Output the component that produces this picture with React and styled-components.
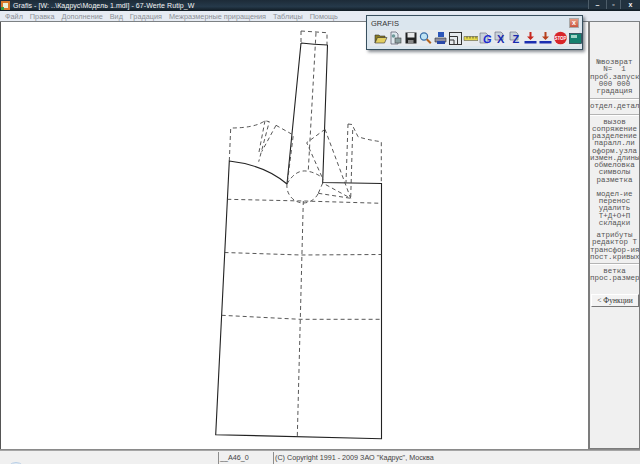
import React from "react";
import styled, { createGlobalStyle } from "styled-components";

const Global = createGlobalStyle`
  html, body { margin: 0; padding: 0; background: #fff; overflow: hidden; }
  * { box-sizing: border-box; }
`;

const Page = styled.div`
  width: 640px; height: 464px; position: relative; overflow: hidden;
  display: flex; flex-direction: column;
  font-family: "Liberation Sans", Arial, sans-serif;
  background: #f0f0f0;
`;
const TitleBar = styled.div`
  height: 11px; flex: none; display: flex; align-items: center; gap: 3px;
  padding: 0 0 1px 1px;
  background: linear-gradient(#1d2b38, #25394a 60%, #101a22);
  color: #f2f2f2; font-size: 7px; white-space: nowrap;
`;
const AppIcon = styled.svg` width: 9px; height: 9px; flex: none; `;
const TitleText = styled.span` flex: 1; letter-spacing: .01em; `;
const WinButtons = styled.div` display: flex; height: 9px; align-self: flex-start; `;
const WinButton = styled.div`
  width: ${p => p.$w}px; height: 9px; color: #f4f4f4; font-size: 7px; font-weight: bold;
  display: flex; align-items: center; justify-content: center;
  background: #22323f; border-left: 1px solid #4d5d69;
`;
const MenuBar = styled.div`
  height: 11px; flex: none; display: flex; align-items: center; gap: 6.9px;
  padding-left: 5px;
  background: #e6ebf3; color: #8b8f96; font-size: 7.3px; white-space: nowrap;
  border-bottom: 1px solid #7d8184;
`;
const Main = styled.div` flex: 1; display: flex; min-height: 0; border-bottom: 1px solid #8a8a8a; `;
const Canvas = styled.div`
  flex: 1; background: #fff; border-left: 1px solid #555; position: relative;
`;
const Drawing = styled.svg` display: block; width: 587px; height: 427px; `;
const Side = styled.aside`
  width: 52px; flex: none; background: #f0f0f0;
  border-left: 2px solid #7c7c7c; border-right: 1px solid #7c7c7c; border-bottom: 1px solid #7c7c7c;
  padding-top: 37px;
  font-family: "Liberation Mono", "DejaVu Sans Mono", monospace; font-size: 7.5px; line-height: 7.25px;
  color: #555; text-align: center; white-space: pre; overflow: hidden;
`;
const Group = styled.div` margin-bottom: ${p => p.$after || 0}px; `;
const Rule = styled.div`
  height: 2px; margin: ${p => p.$top || 0}px 0 ${p => p.$bottom || 0}px;
  border-top: 1px solid #b4b4b4; border-bottom: 1px solid #fff;
`;
const FuncButton = styled.div`
  height: 13px; margin: 11px 0 0 1px; width: 48px;
  background: #f3f3f3; border: 1px solid; border-color: #fff #777 #777 #fff;
  font-family: "Liberation Serif", serif; font-size: 7.5px; line-height: 11px; color: #333;
`;
const StatusBar = styled.div`
  height: 14px; flex: none; display: flex; align-items: flex-start; position: relative; overflow: hidden;
  background: #f0f0f0; border-top: 1px solid #a5a5a5; font-size: 7.2px; color: #444; padding-top: 1px;
`;
const StatusCell = styled.div`
  width: ${p => p.$w}px; height: 12px; line-height: 11px; white-space: nowrap; flex: none;
  padding-left: ${p => p.$pad || 0}px;
  border-left: ${p => (p.$line ? "1px solid #8d8d8d" : "none")};
`;
const Orb = styled.div`
  position: absolute; left: 6px; top: 11px; width: 20px; height: 20px; border-radius: 50%;
  border: 1px solid #b9cfe6; background: #e2ebf4;
`;
const Floater = styled.div`
  position: absolute; left: 366px; top: 15px; width: 217px; height: 35px;
  background: #dbe6ee; border: 1px solid #38505f;
  box-shadow: 2px 2px 3px rgba(40,50,60,.55);
  display: flex; flex-direction: column; padding: 1px 3px;
`;
const FloatHead = styled.div`
  height: 13px; display: flex; justify-content: space-between; align-items: center;
  font-size: 7.5px; color: #333; padding-left: 1px; padding-bottom: 1px;
`;
const FloatClose = styled.div`
  width: 10px; height: 10px; background: linear-gradient(#e99d85, #c9553e); border: 1px solid #a9a9a9;
  color: #fff; font-size: 7px; line-height: 8px; text-align: center; font-weight: bold;
`;
const Tools = styled.div`
  height: 16px; display: flex; align-items: center; background: #e6eaee; padding-left: 3px;
`;
const Tool = styled.svg` width: 15px; height: 16px; flex: none; `;

const menu = ["Файл", "Правка", "Дополнение", "Вид", "Градация", "Межразмерные приращения", "Таблицы", "Помощь"];

const icons = [
  <g key="0"><path d="M2 5h4l1 1h5v2H5l-3 5z" fill="#8a7a20" stroke="#333" strokeWidth=".6"/><path d="M2 13l2.500-5.500H14L11.500 13z" fill="#e3cf62" stroke="#333" strokeWidth=".6"/></g>,
  <g key="1"><path d="M3 2h5l2 2v10H3z" fill="#dfe9ee" stroke="#556" strokeWidth=".7"/><rect x="7" y="8" width="6" height="5" fill="#8aa0a0" stroke="#444" strokeWidth=".6"/><circle cx="5.500" cy="6" r="1.800" fill="#6f9a9a"/></g>,
  <g key="2"><rect x="2.500" y="2.500" width="11" height="11" fill="#222"/><rect x="4.500" y="3" width="7" height="4.500" fill="#e8e8e8"/><rect x="5" y="10" width="5.500" height="3.500" fill="#888"/></g>,
  <g key="3"><circle cx="6" cy="6.500" r="3.600" fill="#bfe3f5" stroke="#3a6ea8" strokeWidth="1.200"/><path d="M8.800 9.300l4 4" stroke="#b5641d" strokeWidth="2"/></g>,
  <g key="4"><rect x="5" y="2" width="6" height="5" fill="#2c55b8"/><path d="M2 8h11v4H2z" fill="#8e8e9e" stroke="#333" strokeWidth=".6"/><rect x="4" y="11" width="8" height="3" fill="#2848a8"/></g>,
  <g key="5" fill="none" stroke="#333" strokeWidth="1"><rect x="1.500" y="2.500" width="12" height="12"/><path d="M1.500 6.500h8v8M1.500 10h4.500v4.500"/></g>,
  <g key="6"><path d="M1 6.500h14v4H1z" fill="#e6d94c" stroke="#444" strokeWidth=".5"/><path d="M4 6.500v2M7 6.500v2M10 6.500v2M13 6.500v2" stroke="#222" strokeWidth=".7"/></g>,
  <g key="7"><path d="M2 3h6l2 2v8H2z" fill="#c8d2da" stroke="#667" strokeWidth=".6"/><text x="5" y="13" fontFamily="Liberation Sans" fontSize="11" fontWeight="bold" fontStyle="italic" fill="#1a2bd0">G</text></g>,
  <g key="8"><path d="M2 2h6l2 2v6H2z" fill="#c8d2da" stroke="#667" strokeWidth=".6"/><text x="4" y="13" fontFamily="Liberation Sans" fontSize="11" fontWeight="bold" fill="#1a2bb0">X</text></g>,
  <g key="9"><path d="M2 2h6l2 2v6H2z" fill="#c8d2da" stroke="#667" strokeWidth=".6"/><text x="4.500" y="13" fontFamily="Liberation Sans" fontSize="11" fontWeight="bold" fill="#1a2bb0">Z</text></g>,
  <g key="10"><path d="M6.500 2h2v4.500H11L7.500 10 4 6.500h2.500z" fill="#c8261c"/><rect x="1.500" y="11" width="12" height="2.500" fill="#1b2fb0"/></g>,
  <g key="11"><path d="M6.500 2h2v4.500H11L7.500 10 4 6.500h2.500z" fill="#b8401c"/><rect x="1.500" y="11" width="12" height="2.500" fill="#1b2fb0"/></g>,
  <g key="12"><circle cx="7.500" cy="8" r="6.300" fill="#d8262a"/><text x="7.500" y="9.700" textAnchor="middle" fontFamily="Liberation Sans" fontSize="4.500" fontWeight="bold" fill="#fff">STOP</text></g>,
  <g key="13"><rect x="1.500" y="3.500" width="12" height="10" fill="#14806f" stroke="#234" strokeWidth=".7"/><rect x="3" y="5" width="6" height="3" fill="#9fd6c8"/></g>,
];

const solid = { fill: "none", stroke: "#222", strokeWidth: 1.100 };
const dash = { fill: "none", stroke: "#444", strokeWidth: .9, strokeDasharray: "4 3" };

export default function App() {
  return (
    <Page>
      <Global />
      <TitleBar>
        <AppIcon viewBox="0 0 9 9"><rect width="9" height="9" fill="#d8792a"/><rect x="2" y="2" width="5" height="5" fill="#e9f0d8"/><rect x="0" y="6" width="3" height="3" fill="#3c9a3c"/></AppIcon>
        <TitleText>Grafis - [W: ..\Кадрус\Модель 1.mdl] - 67-Werte Rutip_W</TitleText>
        <WinButtons>
          <WinButton $w={18}>–</WinButton>
          <WinButton $w={14}>▫</WinButton>
          <WinButton $w={20}>x</WinButton>
        </WinButtons>
      </TitleBar>
      <MenuBar>{menu.map(m => <span key={m}>{m}</span>)}</MenuBar>
      <Main>
        <Canvas>
          <Drawing viewBox="1 22 587 427">
            <path {...solid} d="M301 43Q314 44.500 327.500 45M301 43L287 184M327.500 45L322.700 182.500L381.500 183.500V438.700L215.700 434.700L229.300 161Q265 165 287 184" />
            <path {...dash} d="M301 31L327 32.700V45M301 31V43M316 32.700L308.300 170" />
            <path {...dash} d="M229.300 161L230.700 128Q255 128 265 120.700L269.300 121.700L258.700 161.700M265 120.700L259 152M276 125.300L261.700 151.700M276 125.300L293.300 135L287.300 183" />
            <path {...dash} d="M325 129.300L306.700 142.700L323.300 180M325 129.300L350.700 198.300L322.700 183M318.300 193.300L350.700 198.300M322.700 183L318.300 193.300" />
            <path {...dash} d="M348 124L352 124.500L358 136.700Q368 140 381.300 141.700V183M348 124L346 182.500M352.700 130L350.700 198" />
            <path {...dash} d="M287 184A17 17 0 0 0 303 203A17 17 0 0 0 318.300 193.300M287 184Q295 170 306 171Q315 172 322.700 178" />
            <path {...dash} d="M227.300 199.300L303.300 201L381.300 203.300M224.500 252.500L301 255L381.300 254.500M221.700 315.300L300 319.300H381.300M303.300 201L297.300 436.700" />
          </Drawing>
        </Canvas>
        <Side>
          <Group $after={1}>{"№возврат\nN=  1\nпроб.запуск\n000 000\nградация"}</Group>
          <Rule $top={3} $bottom={3} />
          <Group>отдел.детал</Group>
          <Rule $top={3} $bottom={3} />
          <Group $after={7}>{"вызов\nсопряжение\nразделение\nпаралл.ли\nоформ.узла\nизмен.длины\nобмеловка\nсимволы\nразметка"}</Group>
          <Group $after={5}>{"модел-ие\nперенос\nудалить\nТ+Д+О+П\nскладки"}</Group>
          <Group>{"атрибуты\nредактор Т\nтрансфор-ия\nпост.кривых"}</Group>
          <Rule $top={2} $bottom={3} />
          <Group>{"ветка\nпрос.размер"}</Group>
          <FuncButton>{"< Функции"}</FuncButton>
        </Side>
      </Main>
      <StatusBar>
        <Orb />
        <StatusCell $w={218} />
        <StatusCell $w={55} $line $pad={1}>__A46_0</StatusCell>
        <StatusCell $w={300} $line $pad={1}>(C) Copyright 1991 - 2009 ЗАО "Кадрус", Москва</StatusCell>
      </StatusBar>
      <Floater>
        <FloatHead>GRAFIS<FloatClose>x</FloatClose></FloatHead>
        <Tools>
          {icons.map((ic, i) => <Tool key={i} viewBox="0 0 15 16">{ic}</Tool>)}
        </Tools>
      </Floater>
    </Page>
  );
}
